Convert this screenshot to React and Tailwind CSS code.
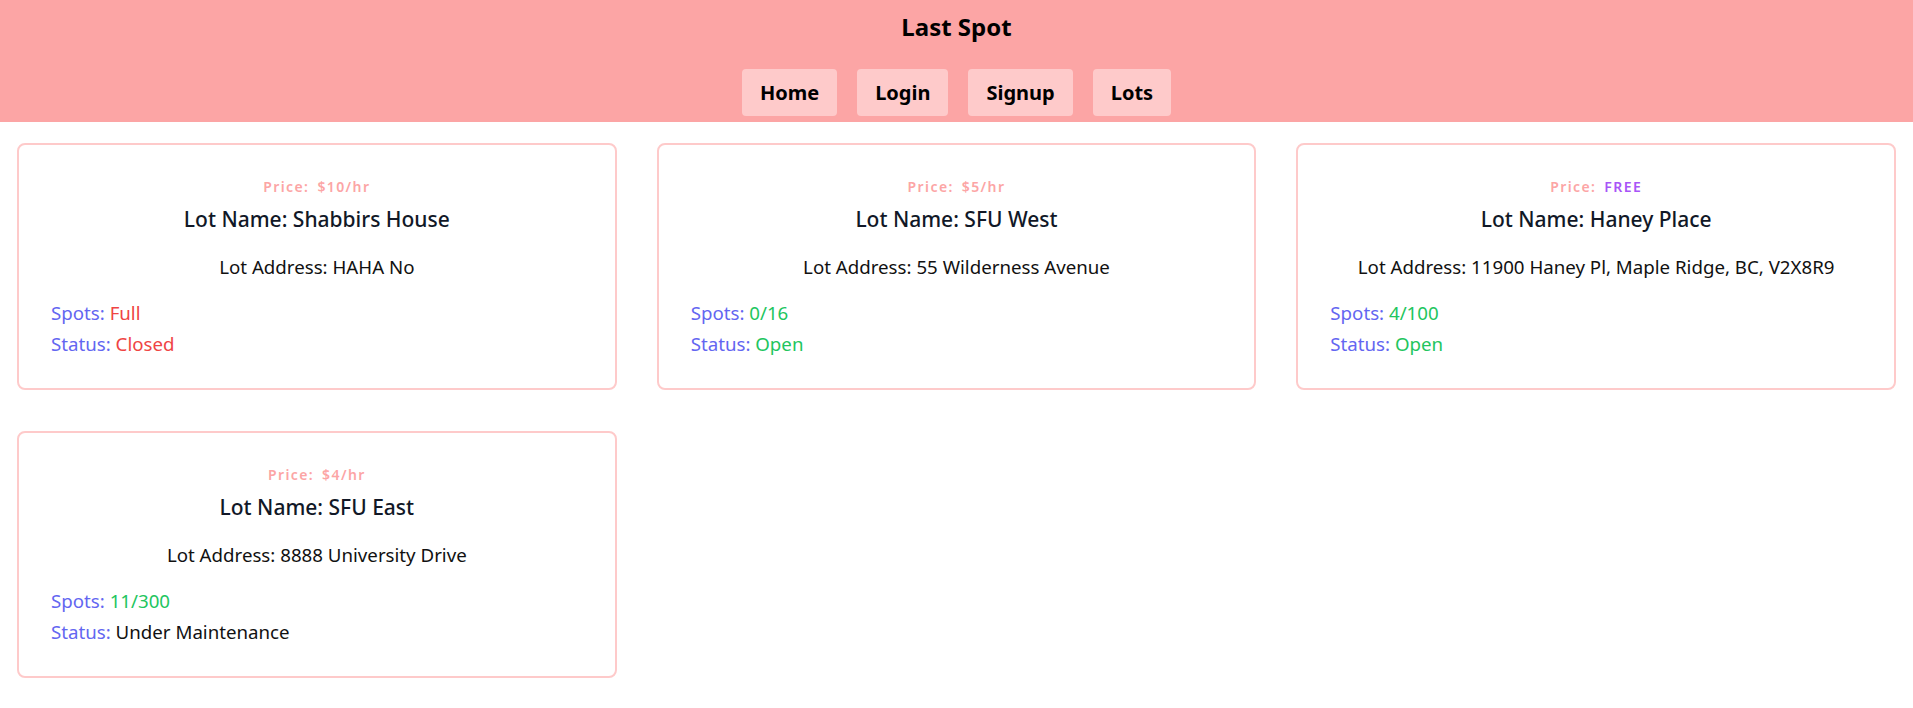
import React from "react";

const lots = [
  { price: "$10/hr", free: false, name: "Shabbirs House", address: "HAHA No", spots: "Full", spotsColor: "text-[#ef4444]", status: "Closed", statusColor: "text-[#ef4444]" },
  { price: "$5/hr", free: false, name: "SFU West", address: "55 Wilderness Avenue", spots: "0/16", spotsColor: "text-[#22c55e]", status: "Open", statusColor: "text-[#22c55e]" },
  { price: "FREE", free: true, name: "Haney Place", address: "11900 Haney Pl, Maple Ridge, BC, V2X8R9", spots: "4/100", spotsColor: "text-[#22c55e]", status: "Open", statusColor: "text-[#22c55e]" },
  { price: "$4/hr", free: false, name: "SFU East", address: "8888 University Drive", spots: "11/300", spotsColor: "text-[#22c55e]", status: "Under Maintenance", statusColor: "text-[#111111]" },
];

function Card({ lot }) {
  return (
    <div className="border-2 border-[#fecaca] rounded-lg px-8 pt-8 pb-[29px] bg-white">
      <div className="text-center text-sm font-semibold tracking-widest leading-5 text-[#fca5a5]">
        <span>Price:</span>
        <span className={"ml-[8px] " + (lot.free ? "text-[#a855f7]" : "text-[#fca5a5]")}>{lot.price}</span>
      </div>
      <div className="mt-2 text-center text-[21px] font-medium leading-7 text-[#111827]">Lot Name: {lot.name}</div>
      <div className="mt-5 text-center text-[18.7px] leading-7 text-[#111111]">Lot Address: {lot.address}</div>
      <div className="mt-4 text-[18.7px] leading-[31px]">
        <span className="text-[#6366f1]">Spots: </span>
        <span className={lot.spotsColor}>{lot.spots}</span>
      </div>
      <div className="text-[18.7px] leading-[31px]">
        <span className="text-[#6366f1]">Status: </span>
        <span className={lot.statusColor}>{lot.status}</span>
      </div>
    </div>
  );
}

export default function App() {
  return (
    <div className="min-h-screen bg-white" style={{ fontFamily: '"Noto Sans", "Open Sans", sans-serif' }}>
      <header className="bg-[#fca5a5] pt-[11px] pb-[6px] flex flex-col items-center">
        <h1 className="text-2xl font-bold leading-8 text-black">Last Spot</h1>
        <nav className="mt-[26px] flex gap-5">
          {["Home", "Login", "Signup", "Lots"].map((l) => (
            <button key={l} className="bg-[#fecaca] rounded px-[18px] h-[47px] text-xl font-bold text-black">
              {l}
            </button>
          ))}
        </nav>
      </header>
      <main className="grid grid-cols-3 gap-x-10 gap-y-[41px] px-[17px] pt-[21px] pb-8">
        {lots.map((lot) => (
          <Card key={lot.name} lot={lot} />
        ))}
      </main>
    </div>
  );
}
